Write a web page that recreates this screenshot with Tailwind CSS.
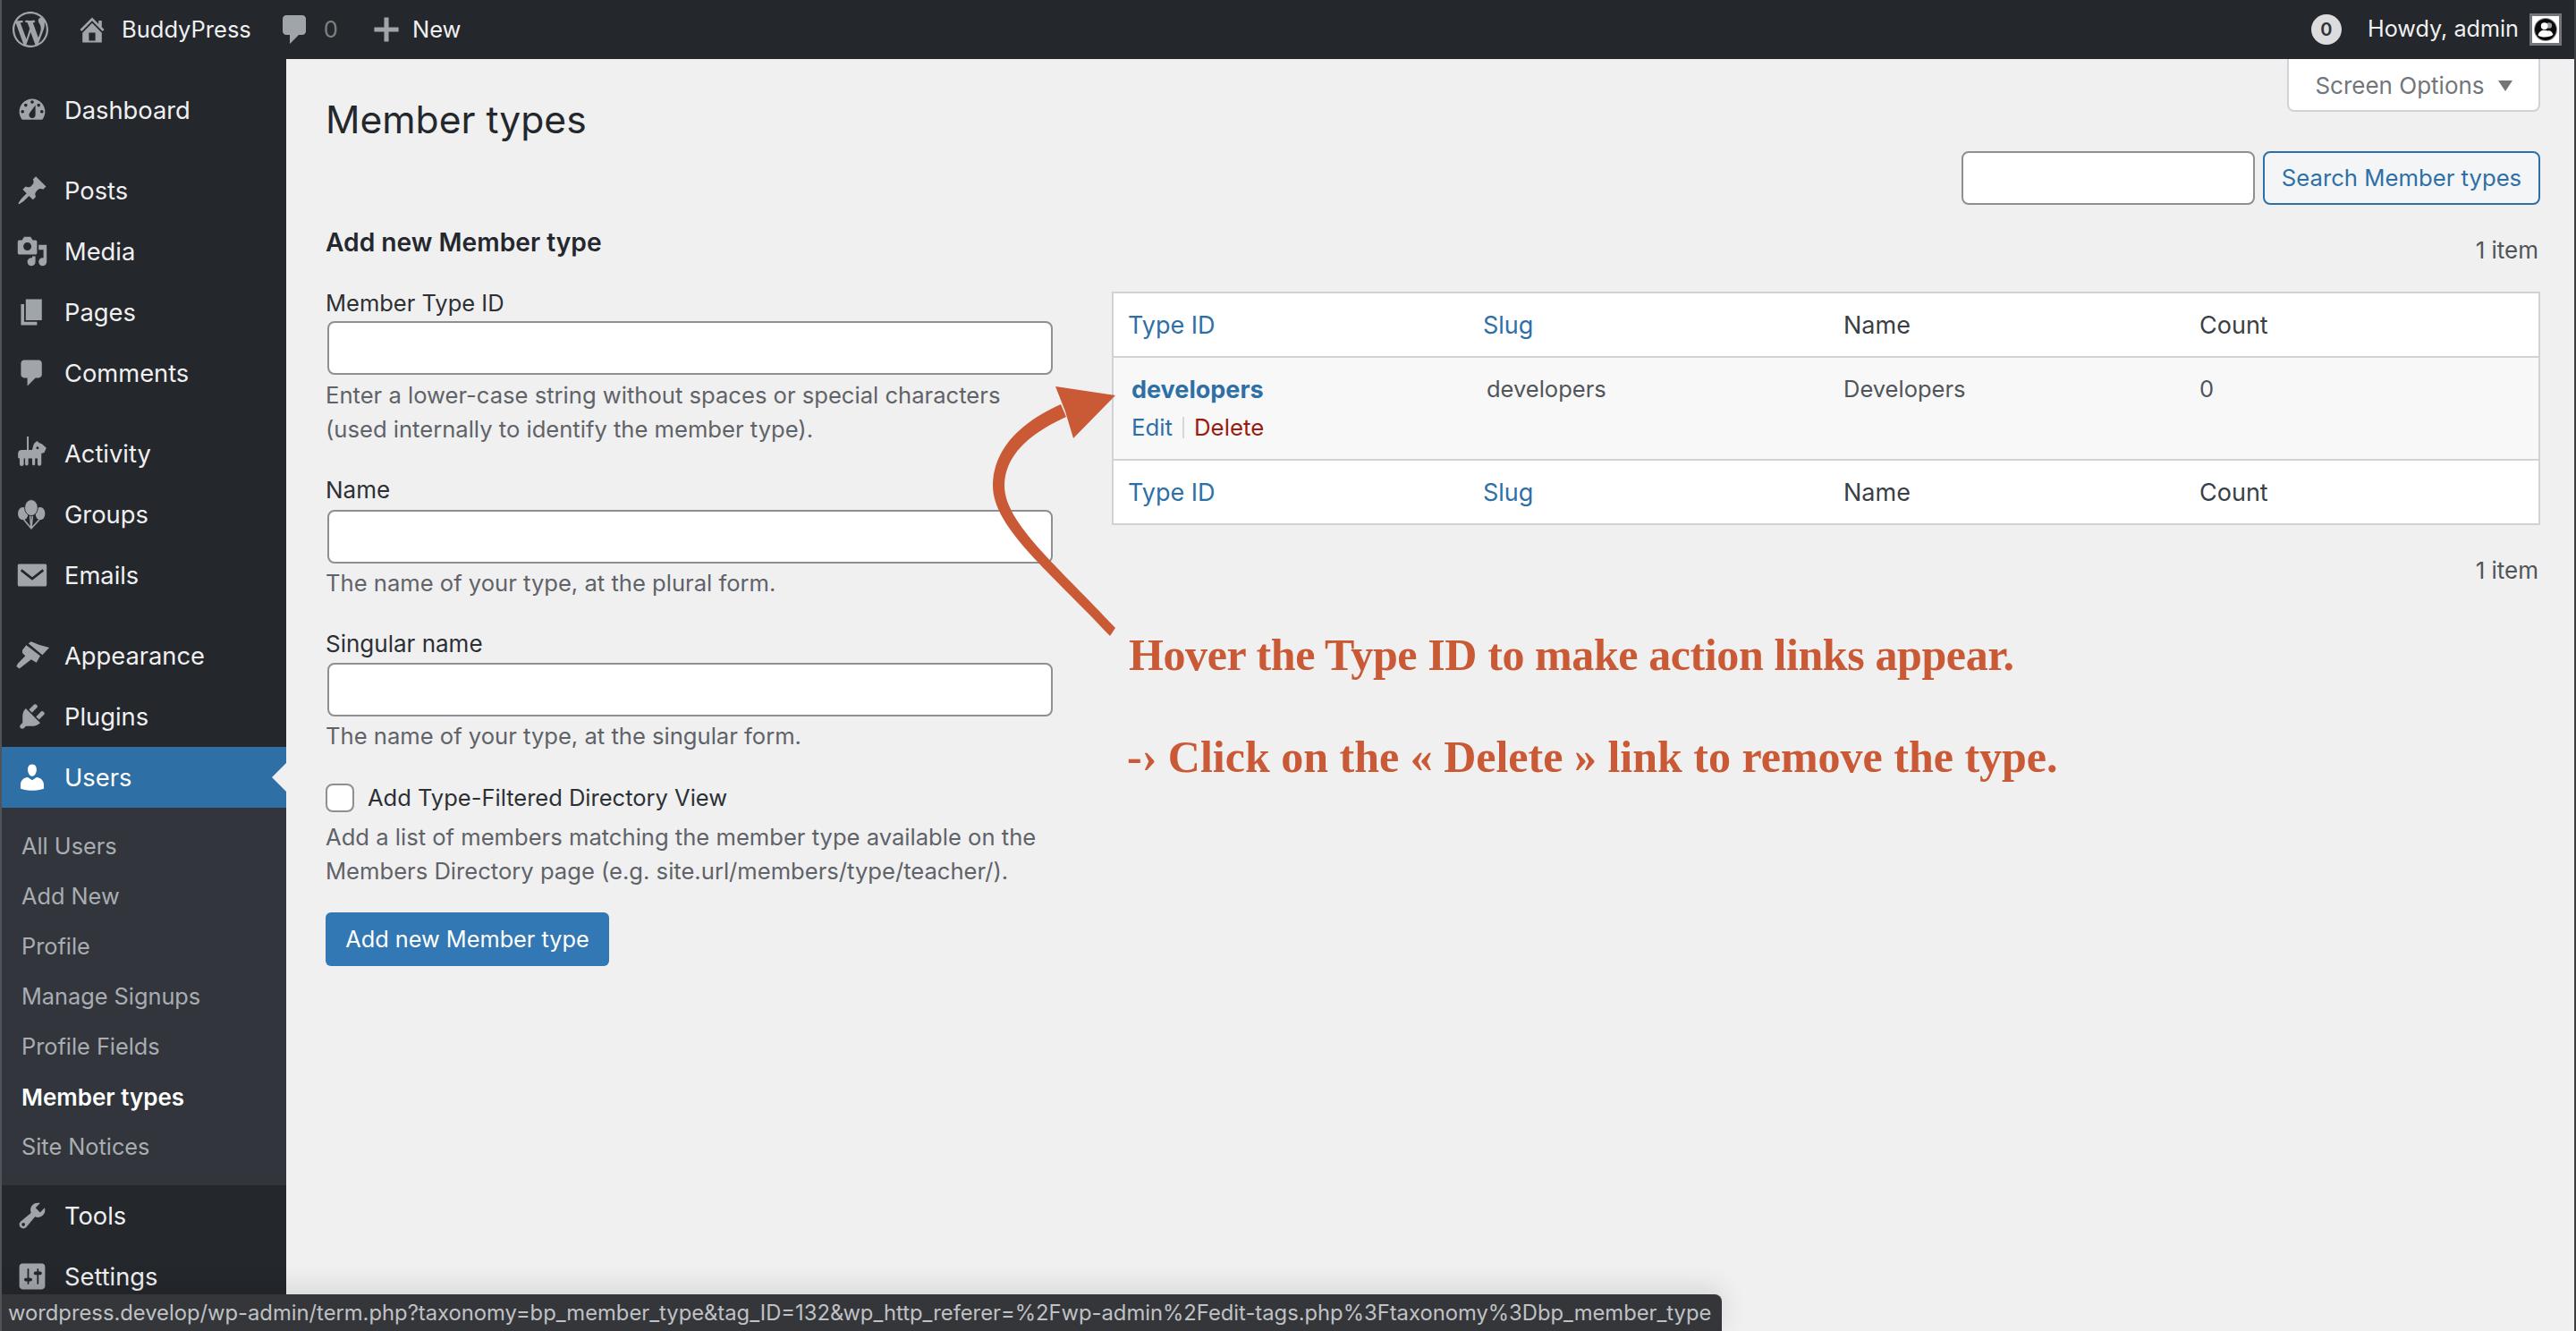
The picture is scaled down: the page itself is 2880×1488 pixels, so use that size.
<!DOCTYPE html>
<html lang="en"><head><meta charset="utf-8"><title>Member types</title>
<script src="https://cdn.jsdelivr.net/npm/@tailwindcss/browser@4"></script></head>
<body class="m-0">
<div class="relative w-[2880px] h-[1488px] overflow-hidden bg-[#f0f0f1] font-['Inter',sans-serif] text-[26px] text-[#2c3035] flex flex-col">

<!-- admin bar -->
<header class="h-[66px] shrink-0 bg-[#24272c] text-[#f0f0f1] flex items-center justify-between pl-[14px] pr-[16px] text-[25.500px]">
  <div class="flex items-center">
    <svg class="w-[40px] h-[40px] text-[#a0a5aa]" viewBox="0 0 20 20" fill="currentColor"><path d="M20 10c0-5.51-4.49-10-10-10C4.48 0 0 4.49 0 10c0 5.52 4.48 10 10 10 5.51 0 10-4.48 10-10zM7.78 15.37L4.37 6.22c.55-.02 1.17-.08 1.17-.08.5-.06.44-1.13-.06-1.11 0 0-1.45.11-2.37.11-.18 0-.37 0-.58-.01C4.12 2.69 6.87 1.11 10 1.11c2.33 0 4.45.87 6.05 2.34-.68-.11-1.65.39-1.65 1.58 0 .74.45 1.36.9 2.1.35.61.55 1.36.55 2.46 0 1.49-1.4 5-1.4 5l-3.03-8.37c.54-.02.82-.17.82-.17.5-.05.44-1.25-.06-1.22 0 0-1.44.12-2.38.12-.87 0-2.33-.12-2.33-.12-.5-.03-.56 1.2-.06 1.22l.92.08 1.26 3.41zM17.41 10c.24-.64.74-1.87.43-4.25.7 1.29 1.05 2.71 1.05 4.25 0 3.29-1.73 6.24-4.4 7.78.97-2.59 1.94-5.2 2.92-7.78zM6.1 18.09C3.12 16.65 1.11 13.53 1.11 10c0-1.3.23-2.48.72-3.59C3.25 10.3 4.67 14.2 6.1 18.09zm4.03-6.63l2.58 6.98c-.86.29-1.76.45-2.71.45-.79 0-1.57-.11-2.29-.33.81-2.38 1.62-4.74 2.42-7.1z"/></svg>
    <svg class="ml-[31px] w-[36px] h-[36px] text-[#a0a5aa]" viewBox="0 0 20 20" fill="currentColor"><path d="M16 8.5l1.53 1.53-1.06 1.06L10 4.62l-6.47 6.47-1.06-1.06L10 2.5l4 4v-2h2v4zm-6-2.46l6 5.99V18H4v-5.97zM12 17v-5H8v5h4z"/></svg>
    <span class="ml-[15px]">BuddyPress</span>
    <svg class="ml-[29px] w-[40px] h-[40px] text-[#a0a5aa]" viewBox="0 0 20 20" fill="currentColor"><path d="M5 2h9c1.1 0 2 .9 2 2v7c0 1.1-.9 2-2 2h-2l-5 5v-5H5c-1.1 0-2-.9-2-2V4c0-1.1.9-2 2-2z"/></svg>
    <span class="ml-[12px] text-[#7d8084]">0</span>
    <svg class="ml-[37px] w-[34px] h-[34px] text-[#a0a5aa]" viewBox="0 0 20 20" fill="currentColor"><path d="M18 8.500v3h-6.500V18h-3v-6.500H2v-3h6.500V2h3v6.500z"/></svg>
    <span class="ml-[12px]">New</span>
  </div>
  <div class="flex items-center">
    <span class="w-[34px] h-[34px] rounded-full bg-[#dcdcde] text-[#2c3035] text-[20px] font-semibold flex items-center justify-center">0</span>
    <span class="ml-[29px] text-[25.200px]">Howdy, admin</span>
    <span class="ml-[12px] w-[36px] h-[36px] bg-white border-[3px] border-[#72767b] flex items-center justify-center">
      <svg class="w-[26px] h-[26px]" viewBox="0 0 20 20"><circle cx="10" cy="10" r="10" fill="#8c8f94"/><circle cx="10" cy="10" r="9.200" fill="#0a0a0a"/><circle cx="13" cy="6.500" r="2.500" fill="#9b9b9b"/><circle cx="9" cy="7" r="3" fill="#fff"/><path d="M3.500 15c.5-3 2.800-4.500 5.500-4.500 1 0 2 .1 3 .6 1.200-.5 3.500 0 4.500 3.400-3 2.500-10 2.800-13 .5z" fill="#fff"/></svg>
    </span>
  </div>
</header>

<div class="flex flex-1 min-h-0">
  <!-- sidebar -->
  <nav class="w-[320px] shrink-0 bg-[#24272c] text-[#f0f0f1] text-[27.300px] pt-[23px] overflow-hidden">
    <a class="flex items-center h-[68px] pl-[18px]"><svg class="w-[36px] h-[36px] text-[#a0a5aa] shrink-0" viewBox="0 0 20 20" fill="currentColor" fill-rule="evenodd"><path d="M3.76 16h12.48c1.1-1.37 1.76-3.110 1.760-5 0-4.420-3.580-8-8-8s-8 3.580-8 8c0 1.890.66 3.630 1.760 5zM10 4c.55 0 1 .45 1 1s-.45 1-1 1-1-.45-1-1 .45-1 1-1zM6 6c.55 0 1 .45 1 1s-.45 1-1 1-1-.45-1-1 .45-1 1-1zm8 0c.55 0 1 .45 1 1s-.45 1-1 1-1-.45-1-1 .45-1 1-1zM4 10c.55 0 1 .45 1 1s-.45 1-1 1-1-.45-1-1 .45-1 1-1zm12 0c.55 0 1 .45 1 1s-.45 1-1 1-1-.45-1-1 .45-1 1-1zM12 7l-3.370 4.550A2 2 0 1 0 12 13z"/></svg><span class="ml-[18px] mt-[2px]">Dashboard</span></a>
    <div class="h-[22px]"></div>
    <a class="flex items-center h-[68px] pl-[18px]"><svg class="w-[36px] h-[36px] text-[#a0a5aa] shrink-0" viewBox="0 0 20 20" fill="currentColor"><path d="M10.44 3.020l1.820-1.820 6.360 6.350-1.830 1.820c-1.050-.68-2.480-.57-3.410.36l-.75.75c-.92.93-1.040 2.350-.35 3.410l-1.830 1.820-2.410-2.410-2.800 2.790c-.42.42-3.380 2.710-3.800 2.290s1.860-3.390 2.280-3.810l2.790-2.790L4.100 9.360l1.830-1.820c1.050.69 2.480.57 3.400-.36l.75-.75c.93-.92 1.050-2.350.36-3.410z"/></svg><span class="ml-[18px] mt-[2px]">Posts</span></a>
    <a class="flex items-center h-[68px] pl-[18px]"><svg class="w-[36px] h-[36px] text-[#a0a5aa] shrink-0" viewBox="0 0 20 20" fill="currentColor"><path d="M13 11V4c0-.55-.45-1-1-1h-1.670L9 1H5L3.670 3H2c-.55 0-1 .45-1 1v7c0 .55.45 1 1 1h10c.55 0 1-.45 1-1zM7 4.500c1.380 0 2.500 1.120 2.500 2.500S8.380 9.500 7 9.500 4.500 8.380 4.500 7 5.620 4.500 7 4.500zM14 6h5v10.500c0 1.380-1.120 2.500-2.500 2.500S14 17.880 14 16.500s1.120-2.500 2.500-2.500c.17 0 .34.02.5.05V9h-3V6zm-4 8.050V13h2v3.500c0 1.380-1.120 2.500-2.500 2.500S7 17.880 7 16.500 8.120 14 9.500 14c.17 0 .34.02.5.05z"/></svg><span class="ml-[18px] mt-[2px]">Media</span></a>
    <a class="flex items-center h-[68px] pl-[18px]"><svg class="w-[36px] h-[36px] text-[#a0a5aa] shrink-0" viewBox="0 0 20 20" fill="currentColor"><path d="M6 15V2h10v13H6zm-1 1h8v2H3V5h2v11z"/></svg><span class="ml-[18px] mt-[2px]">Pages</span></a>
    <a class="flex items-center h-[68px] pl-[18px]"><svg class="w-[36px] h-[36px] text-[#a0a5aa] shrink-0" viewBox="0 0 20 20" fill="currentColor"><path d="M5 2h9c1.100 0 2 .9 2 2v7c0 1.100-.9 2-2 2h-2l-5 5v-5H5c-1.100 0-2-.9-2-2V4c0-1.100.9-2 2-2z"/></svg><span class="ml-[18px] mt-[2px]">Comments</span></a>
    <div class="h-[22px]"></div>
    <a class="flex items-center h-[68px] pl-[18px]"><svg class="w-[36px] h-[36px] text-[#a0a5aa] shrink-0 overflow-visible" viewBox="0 0 20 20" fill="currentColor"><path fill-rule="evenodd" d="M1.200 10C1.200 8.500 2.200 7.800 3.500 7.800H6.700V-.5H7.800V7.800H10C10.500 6 10.800 4 11.500 3.500L13 2.200 14.500 3.500 16 4 18.800 6.500 17.500 9.500 15.700 10V16.500a1.100 1.100 0 0 1-2.400 0V13H11.800V16.500a.9.9 0 0 1-1.800 0V13H7.600V16.500a1 1 0 0 1-2 0V13H4.800V16.500a1.300 1.300 0 0 1-2.600 0V13L1.200 12.800zM13.300 5.700a.8.8 0 1 0 .01 0z"/></svg><span class="ml-[18px] mt-[2px]">Activity</span></a>
    <a class="flex items-center h-[68px] pl-[18px]"><svg class="w-[36px] h-[36px] text-[#a0a5aa] shrink-0" viewBox="0 0 20 20" fill="currentColor"><ellipse cx="4.300" cy="9.500" rx="3.200" ry="4"/><ellipse cx="15" cy="9.500" rx="3" ry="4"/><ellipse cx="9.400" cy="5.900" rx="4.100" ry="5" stroke="#24272c" stroke-width=".5"/><path d="M4.800 13.300 9.400 18.800 14.400 13.300M8.700 11 9.400 18.800 10.200 11" fill="none" stroke="currentColor" stroke-width=".9"/></svg><span class="ml-[18px] mt-[2px]">Groups</span></a>
    <a class="flex items-center h-[68px] pl-[18px]"><svg class="w-[36px] h-[36px] text-[#a0a5aa] shrink-0" viewBox="0 0 20 20" fill="currentColor"><path fill-rule="evenodd" d="M2 3h16c.6 0 1 .4 1 1v12c0 .6-.4 1-1 1H2c-.6 0-1-.4-1-1V4c0-.6.4-1 1-1zm1.600 3.300-.9 1.200 7.300 5.700 7.300-5.700-.9-1.200-6.400 4.900z"/></svg><span class="ml-[18px] mt-[2px]">Emails</span></a>
    <div class="h-[22px]"></div>
    <a class="flex items-center h-[68px] pl-[18px]"><svg class="w-[36px] h-[36px] text-[#a0a5aa] shrink-0 overflow-visible" viewBox="0 0 20 20" fill="currentColor"><path d="M3.900 6.500 6.300 3.500 15 10.200 12.600 14.300 9.400 12.400 2 18 .2 16.700 1.100 14.800 5.700 10.200 3.900 8.300z"/><path d="M7.600 2.400 9.400 1.300 14.100 3.200 20.600 5 16.300 9.600z"/></svg><span class="ml-[18px] mt-[2px]">Appearance</span></a>
    <a class="flex items-center h-[68px] pl-[18px]"><svg class="w-[36px] h-[36px] text-[#a0a5aa] shrink-0" viewBox="0 0 20 20" fill="currentColor"><path d="M13.110 4.360L9.870 7.600 8 5.730l3.240-3.240c.35-.34 1.050-.2 1.560.32.52.51.66 1.210.31 1.550zm-8 1.770l.91-1.120 9.010 9.010-1.190.84c-.71.71-2.630 1.160-3.820 1.160H6.140L4.900 17.260c-.59.59-1.540.59-2.120 0-.59-.58-.59-1.530 0-2.120l1.240-1.240v-3.880c0-1.130.4-3.190 1.090-3.890zm7.260 3.970l3.240-3.240c.34-.35 1.040-.21 1.550.31.52.51.66 1.210.31 1.550l-3.240 3.250z"/></svg><span class="ml-[18px] mt-[2px]">Plugins</span></a>
    <a class="relative flex items-center h-[68px] pl-[18px] bg-[#2e70a6] text-white"><svg class="w-[36px] h-[36px] text-white shrink-0" viewBox="0 0 20 20" fill="currentColor"><path d="M10 9.250c-2.270 0-2.730-3.440-2.730-3.440C7 4.020 7.820 2 9.970 2c2.160 0 2.980 2.020 2.710 3.810 0 0-.41 3.440-2.680 3.440zm0 2.570L12.720 10c2.390 0 4.520 2.330 4.520 4.530v2.490s-3.650 1.130-7.240 1.130c-3.650 0-7.240-1.130-7.240-1.130v-2.490c0-2.250 1.940-4.480 4.470-4.480z"/></svg><span class="ml-[18px] mt-[2px]">Users</span><span class="absolute right-0 top-[18px] w-0 h-0 border-y-[16px] border-y-transparent border-r-[16px] border-r-[#f0f0f1]"></span></a>
    <div class="bg-[#32363c] text-[#a9adb2] text-[25.300px] pl-[24px] pt-[15px] pb-[15px] flex flex-col">
      <a class="h-[56px] flex items-center">All Users</a>
      <a class="h-[56px] flex items-center">Add New</a>
      <a class="h-[56px] flex items-center">Profile</a>
      <a class="h-[56px] flex items-center">Manage Signups</a>
      <a class="h-[56px] flex items-center">Profile Fields</a>
      <a class="h-[56px] flex items-center font-semibold text-white text-[26px]">Member types</a>
      <a class="h-[56px] flex items-center">Site Notices</a>
    </div>
    <a class="flex items-center h-[68px] pl-[18px]"><svg class="w-[36px] h-[36px] text-[#a0a5aa] shrink-0" viewBox="0 0 20 20" fill="currentColor"><path d="M16.680 9.770c-1.340 1.340-3.300 1.670-4.950.99l-5.410 6.520c-.99.99-2.590.99-3.580 0s-.99-2.590 0-3.570l6.520-5.420c-.68-1.650-.35-3.610.99-4.950 1.280-1.280 3.120-1.620 4.720-1.060l-2.890 2.890 2.820 2.820 2.860-2.870c.53 1.580.18 3.390-1.080 4.650zM3.810 16.210c.4.39 1.040.39 1.430 0 .4-.4.4-1.040 0-1.430-.39-.4-1.030-.4-1.430 0-.39.39-.39 1.030 0 1.430z"/></svg><span class="ml-[18px] mt-[2px]">Tools</span></a>
    <a class="flex items-center h-[68px] pl-[18px]"><svg class="w-[36px] h-[36px] text-[#a0a5aa] shrink-0" viewBox="0 0 20 20" fill="currentColor"><path d="M18 16V4c0-1.100-.9-2-2-2H4c-1.100 0-2 .9-2 2v12c0 1.100.9 2 2 2h12c1.100 0 2-.9 2-2zM8 11h1c.55 0 1 .45 1 1s-.45 1-1 1H8v1.500c0 .28-.22.5-.5.5s-.5-.22-.5-.5V13H6c-.55 0-1-.45-1-1s.45-1 1-1h1V5.500c0-.28.22-.5.5-.5s.5.22.5.5V11zm5-2h-1c-.55 0-1-.45-1-1s.45-1 1-1h1V5.500c0-.28.22-.5.5-.5s.5.22.5.5V7h1c.55 0 1 .45 1 1s-.45 1-1 1h-1v5.500c0 .28-.22.5-.5.5s-.5-.22-.5-.5V9z"/></svg><span class="ml-[18px] mt-[2px]">Settings</span></a>
  </nav>

  <!-- main -->
  <main class="flex-1 pl-[44px] pr-[40px]">
    <div class="flex justify-between items-start">
      <h1 class="mt-[38px] text-[42.600px] leading-[60px] font-normal text-[#24282d]">Member types</h1>
      <button class="w-[283px] h-[59px] bg-white border-x-2 border-b-2 border-[#cfd2d6] rounded-b-[8px] text-[#72767b] flex items-center justify-center gap-[15px] pt-[2px]">Screen Options<span class="w-0 h-0 border-x-[8px] border-x-transparent border-t-[12px] border-t-[#72767b]"></span></button>
    </div>
    <div class="flex justify-end gap-[9px] mt-[5px]">
      <input class="w-[328px] h-[60px] bg-white border-2 border-[#8c8f94] rounded-[8px]" aria-label="Search">
      <button class="w-[310px] h-[60px] bg-[#f3f5f6] border-2 border-[#2e70a6] rounded-[8px] text-[#2e70a6] text-[25.700px]">Search Member types</button>
    </div>
    <div class="flex">
      <section class="w-[813px] shrink-0">
        <h2 class="mt-[24px] text-[28.200px] leading-[36px] font-semibold text-[#24282d]">Add new Member type</h2>
        <label class="block mt-[32px] leading-[36px] text-[25.500px]">Member Type ID</label>
        <input class="block mt-[2px] ml-[2px] w-[811px] h-[60px] bg-white border-2 border-[#8c8f94] rounded-[8px]" aria-label="Member Type ID">
        <p class="mt-[4px] text-[#5f6368] leading-[38px] text-[25.600px]">Enter a lower-case string without spaces or special characters<br>(used internally to identify the member type).</p>
        <label class="block mt-[31px] leading-[36px]">Name</label>
        <input class="block mt-[4px] ml-[2px] w-[811px] h-[60px] bg-white border-2 border-[#8c8f94] rounded-[8px]" aria-label="Name">
        <p class="mt-[3px] text-[#5f6368] leading-[38px] text-[25.600px]">The name of your type, at the plural form.</p>
        <label class="block mt-[31px] leading-[36px]">Singular name</label>
        <input class="block mt-[3px] ml-[2px] w-[811px] h-[60px] bg-white border-2 border-[#8c8f94] rounded-[8px]" aria-label="Singular name">
        <p class="mt-[3px] text-[#5f6368] leading-[38px] text-[25.600px]">The name of your type, at the singular form.</p>
        <div class="mt-[31px] flex items-center">
          <span class="w-[32px] h-[32px] bg-white border-2 border-[#8c8f94] rounded-[8px]"></span>
          <span class="ml-[15px] text-[25.500px]">Add Type-Filtered Directory View</span>
        </div>
        <p class="mt-[6px] text-[#5f6368] leading-[38px] text-[25.600px]">Add a list of members matching the member type available on the<br>Members Directory page (e.g. site.url/members/type/teacher/).</p>
        <button class="mt-[27px] w-[317px] h-[60px] bg-[#3278b4] rounded-[6px] text-white text-[25.300px]">Add new Member type</button>
      </section>
      <section class="flex-1 pl-[66px]">
        <p class="mt-[38px] leading-[26px] text-right text-[#50555a] pr-[2px]">1 item</p>
        <div class="mt-[33px] border-2 border-[#cfd2d6] bg-white">
          <div class="grid grid-cols-[397px_403px_398px_1fr] h-[72px] items-center pl-[16px] pt-[2px] border-b-2 border-[#cfd2d6] text-[27px] text-[#3a3f45]">
            <a class="text-[#2e70a6]">Type ID</a><a class="text-[#2e70a6]">Slug</a><span>Name</span><span>Count</span>
          </div>
          <div class="grid grid-cols-[397px_403px_398px_1fr] h-[115px] pl-[16px] bg-[#f8f8f9] border-b-2 border-[#cfd2d6] text-[#50555a] text-[25.500px]">
            <div class="pl-[4px] pt-[20px]">
              <a class="block leading-[32px] font-bold text-[#2e70a6] text-[27px]">developers</a>
              <div class="mt-[10px] leading-[32px] text-[25.800px] flex items-center"><a class="text-[#2e70a6]">Edit</a><span class="mx-[11px] w-[2px] h-[24px] bg-[#d5d7da]"></span><a class="text-[#9c1a10]">Delete</a></div>
            </div>
            <span class="pl-[4px] pt-[19px] leading-[32px]">developers</span>
            <span class="pt-[19px] leading-[32px]">Developers</span>
            <span class="pt-[19px] leading-[32px]">0</span>
          </div>
          <div class="grid grid-cols-[397px_403px_398px_1fr] h-[70px] items-center pl-[16px] pt-[2px] text-[27px] text-[#3a3f45]">
            <a class="text-[#2e70a6]">Type ID</a><a class="text-[#2e70a6]">Slug</a><span>Name</span><span>Count</span>
          </div>
        </div>
        <p class="mt-[38px] leading-[26px] text-right text-[#50555a] pr-[2px]">1 item</p>
      </section>
    </div>
  </main>
</div>

<!-- annotation overlay -->
<svg class="absolute left-[1090px] top-[420px] w-[180px] h-[300px]" viewBox="1090 420 180 300" fill="#c95a35">
  <path d="M1241 711C1175 640 1110 590 1110 543C1110 500 1145 470 1186 452L1192 466C1150 485 1123 510 1123 543C1123 585 1185 635 1247 702z"/>
  <path d="M1180 432L1247 442L1200 490L1191 460z"/>
</svg>
<p class="absolute left-[1262px] top-[702px] font-['Liberation_Serif',serif] font-bold text-[50px] tracking-[-0.4px] leading-[60px] text-[#c95a35] whitespace-nowrap">Hover the Type ID to make action links appear.</p>
<p class="absolute left-[1260px] top-[816px] font-['Liberation_Serif',serif] font-bold text-[50px] leading-[60px] text-[#c95a35] whitespace-nowrap">-› Click on the « Delete » link to remove the type.</p>

<!-- status bubble -->
<div class="absolute left-0 bottom-0 w-[1925px] h-[41px] bg-[#35363a] rounded-tr-[8px] text-[#bfc1c4] text-[23.770px] leading-[41px] pl-[9px] whitespace-nowrap shadow-[0_-6px_30px_rgba(0,0,0,0.12)]">wordpress.develop/wp-admin/term.php?taxonomy=bp_member_type&amp;tag_ID=132&amp;wp_http_referer=%2Fwp-admin%2Fedit-tags.php%3Ftaxonomy%3Dbp_member_type</div>

<!-- window edges -->
<div class="absolute left-0 top-0 bottom-0 w-[2px] bg-[#50545a]"></div>
<div class="absolute right-0 top-0 bottom-0 w-[2px] bg-[#3c3f44]"></div>
</div>
</body></html>
